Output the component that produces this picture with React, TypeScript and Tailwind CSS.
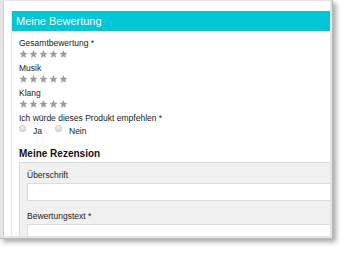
import React from "react";

const Star = () => (
  <svg width="9" height="8" viewBox="0 1 24 22" className="block">
    <polygon
      points="12,1 15.1,8.3 23,9 17,14.3 18.8,22 12,18 5.2,22 7,14.3 1,9 8.9,8.3"
      fill="#9c9c9c"
    />
  </svg>
);

const Stars = () => (
  <div className="flex gap-[1px] h-[8px] mt-[2px]">
    <Star />
    <Star />
    <Star />
    <Star />
    <Star />
  </div>
);

const Radio = () => (
  <div className="w-[7px] h-[7px] rounded-full border border-[#c2c2c2] bg-gradient-to-b from-[#f6f6f6] to-[#d8d8d8] shrink-0" />
);

const Label = ({ children }: { children: React.ReactNode }) => (
  <div className="text-[8.5px] leading-[10px] text-[#222] whitespace-nowrap">{children}</div>
);

export default function App() {
  return (
    <div
      className="w-[345px] h-[253px] bg-white overflow-hidden relative"
      style={{ fontFamily: '"Liberation Sans", Arial, sans-serif' }}
    >
      <div className="w-[333px] h-[239px] bg-[#e4e4e4] pl-[3px] pt-[1px] pr-[2px] pb-[2px] shadow-[3px_3px_5px_rgba(0,0,0,0.35)] border-r border-b border-[#b9b9b9]">
        <div className="w-full h-full bg-white border-l border-[#cdcdcd] pl-[7px] pt-[10px] overflow-hidden">
          <div className="h-full border-l border-[#e6e6e6]">
            <div className="h-[20px] bg-[#00c6d6] text-white text-[11px] leading-[20px] pl-[4px]">
              Meine Bewertung
            </div>
            <div className="pl-[7px] pt-[7px]">
              <Label>Gesamtbewertung *</Label>
              <Stars />
              <div className="h-[5px]" />
              <Label>Musik</Label>
              <Stars />
              <div className="h-[5px]" />
              <Label>Klang</Label>
              <Stars />
              <div className="h-[5px]" />
              <Label>Ich würde dieses Produkt empfehlen *</Label>
              <div className="flex items-start mt-[2px] h-[11px]">
                <Radio />
                <div className="ml-[7px] mt-[1px] w-[22px]">
                  <Label>Ja</Label>
                </div>
                <Radio />
                <div className="ml-[7px] mt-[1px]">
                  <Label>Nein</Label>
                </div>
              </div>
              <div className="mt-[12px] text-[10px] leading-[12px] font-bold text-[#111]">
                Meine Rezension
              </div>
              <div className="mt-[2px] bg-[#f0f0f0] border-t border-l border-[#dadada] pl-[7px] pt-[7px] pb-[10px]">
                <Label>Überschrift</Label>
                <div className="mt-[3px] h-[18px] bg-white border-t border-b border-l border-[#dcdcdc]" />
                <div className="mt-[10px]">
                  <Label>Bewertungstext *</Label>
                </div>
                <div className="mt-[3px] h-[30px] bg-white border-t border-l border-[#dcdcdc]" />
              </div>
            </div>
          </div>
        </div>
      </div>
    </div>
  );
}
